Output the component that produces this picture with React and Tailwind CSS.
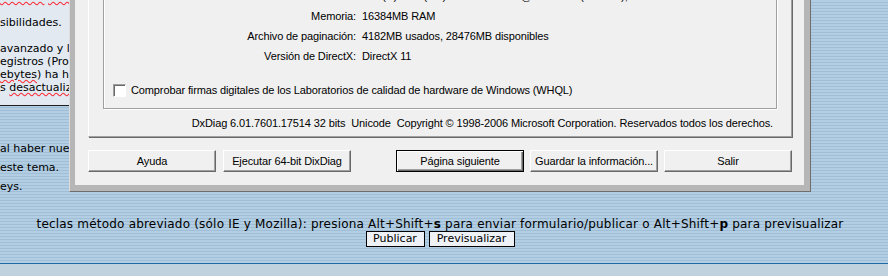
const SPECS = [
  ['Nombre del equipo', 'ESCRITORIO-PC'],
  ['Sistema operativo', 'Windows 7 Ultimate 64-bit (6.1, compilación 7601)'],
  ['Fabricante del sistema', 'To Be Filled By O.E.M.'],
  ['Modelo del sistema', 'To Be Filled By O.E.M.'],
  ['BIOS', 'BIOS Date: 05/28/13 Ver: 04.06.05'],
  ['Procesador', 'Intel(R) Core(TM) i5-3570K CPU @ 3.40GHz (4 CPUs), ~3.4GHz'],
  ['Memoria', '16384MB RAM'],
  ['Archivo de paginación', '4182MB usados, 28476MB disponibles'],
  ['Versión de DirectX', 'DirectX 11'],
]

const BTN =
  'h-[22px] w-[128px] bg-[#f0f0f0] border border-t-white border-l-white border-r-[#696969] border-b-[#696969] shadow-[inset_-1px_-1px_0_#a0a0a0] text-center leading-[20px]'

function Button({ label, primary }) {
  if (primary) {
    return (
      <div className="h-[22px] w-[128px] bg-[#f0f0f0] border border-black shadow-[inset_1px_1px_0_#fff,inset_-1px_-1px_0_#696969,inset_-2px_-2px_0_#a0a0a0] text-center leading-[20px]">
        {label}
      </div>
    )
  }
  return <div className={BTN}>{label}</div>
}

function DxDiagWindow() {
  return (
    <div className="absolute left-[69px] bottom-[84px] w-[742px] bg-[#b6b6b6] border-l border-l-[#dcdcdc] border-r border-b border-r-[#6e6e6e] border-b-[#6e6e6e] pl-[5px] pr-[6px] pb-[6px] font-['Liberation_Sans',Arial,sans-serif] text-[11px] tracking-[-0.12px] text-black">
      <div className="bg-[#f0f0f0] pl-[13px] pr-[12px] pt-[10px] pb-[13px]">
        {/* pestaña Sistema */}
        <div className="border border-t-white border-l-white border-r-[#a0a0a0] border-b-[#a0a0a0] shadow-[1px_1px_0_#696969] px-[14px] pt-[10px] pb-[6px]">
          <div className="border border-[#a0a0a0] shadow-[inset_1px_1px_0_#fff,1px_1px_0_#fff] pt-[8px] pb-[11px] pl-[9px]">
            <div className="grid grid-cols-[243px_1fr] gap-x-[6px]">
              {SPECS.map(([k, v]) => (
                <div key={k} className="contents">
                  <div className="h-[20px] leading-[20px] text-right">{k}:</div>
                  <div className="h-[20px] leading-[20px]">{v}</div>
                </div>
              ))}
            </div>
            <div className="flex items-center gap-[5px] mt-[18px] h-[13px]">
              <div className="w-[13px] h-[13px] bg-white border border-t-[#a0a0a0] border-l-[#a0a0a0] border-r-white border-b-white shadow-[inset_1px_1px_0_#696969]" />
              <span className="leading-[13px]">
                Comprobar firmas digitales de los Laboratorios de calidad de hardware de Windows (WHQL)
              </span>
            </div>
          </div>
          <div className="mt-[8px] h-[13px] leading-[13px] text-right pr-[4px] whitespace-pre">
            {'DxDiag 6.01.7601.17514 32 bits  Unicode  Copyright © 1998-2006 Microsoft Corporation. Reservados todos los derechos.'}
          </div>
        </div>

        <div className="flex mt-[13px]">
          <div className="flex gap-[7px]">
            <Button label="Ayuda" />
            <Button label="Ejecutar 64-bit DixDiag" />
          </div>
          <div className="flex gap-[6px] ml-auto">
            <Button label="Página siguiente" primary />
            <Button label="Guardar la información..." />
            <Button label="Salir" />
          </div>
        </div>
      </div>
    </div>
  )
}

export default function App() {
  return (
    <div className="relative w-[888px] h-[276px] overflow-hidden flex flex-col bg-[image:repeating-linear-gradient(180deg,#b3cee2_0px,#b3cee2_2px,#9fbed7_2px,#9fbed7_3px)] font-['DejaVu_Sans',Verdana,sans-serif] text-[11px] text-black">
      {/* mensaje del foro (tapado por la ventana) */}
      <div className="w-[300px] h-[116px] shrink-0 bg-[#e2e9f1] border-b border-[#1e1e1e] leading-[13px] mt-[-10px] whitespace-nowrap overflow-hidden">
        <div className="h-[13px]">
          <span className="underline decoration-wavy decoration-red-500">direcxtx</span>{' '}
          <span className="underline decoration-wavy decoration-red-500">actualizado</span>
        </div>
        <div className="h-[13px]" />
        <div className="h-[13px]">sibilidades.</div>
        <div className="h-[13px]" />
        <div className="h-[13px]">avanzado y la configuración</div>
        <div className="h-[13px]">egistros (Programas)</div>
        <div className="h-[13px]">
          <span className="underline decoration-wavy decoration-red-500">ebytes</span>) ha hecho
        </div>
        <div className="h-[13px]">
          s <span className="underline decoration-wavy decoration-red-500">desactualizados</span>
        </div>
      </div>

      <div className="mt-[33px] leading-[19px] whitespace-nowrap">
        <div>al haber nuevas respuestas</div>
        <div>este tema.</div>
        <div>eys.</div>
      </div>

      <div className="mt-[21px] flex flex-col items-center pr-[8px]">
        <div className="leading-[14px] whitespace-nowrap text-[12px] tracking-[0.2px]">
          teclas método abreviado (sólo IE y Mozilla): presiona Alt+Shift+<b>s</b> para enviar formulario/publicar o Alt+Shift+<b>p</b> para previsualizar
        </div>
        <div className="flex gap-[4px]">
          <div className="h-[16px] w-[59px] bg-[#eef2f6] border border-black text-center leading-[14px]">Publicar</div>
          <div className="h-[16px] w-[86px] bg-[#eef2f6] border border-black text-center leading-[14px]">Previsualizar</div>
        </div>
      </div>

      <div className="mt-auto h-[13px] shrink-0 bg-[#bfd2de] border-t border-[#1f6aa5]" />

      <DxDiagWindow />
    </div>
  )
}
